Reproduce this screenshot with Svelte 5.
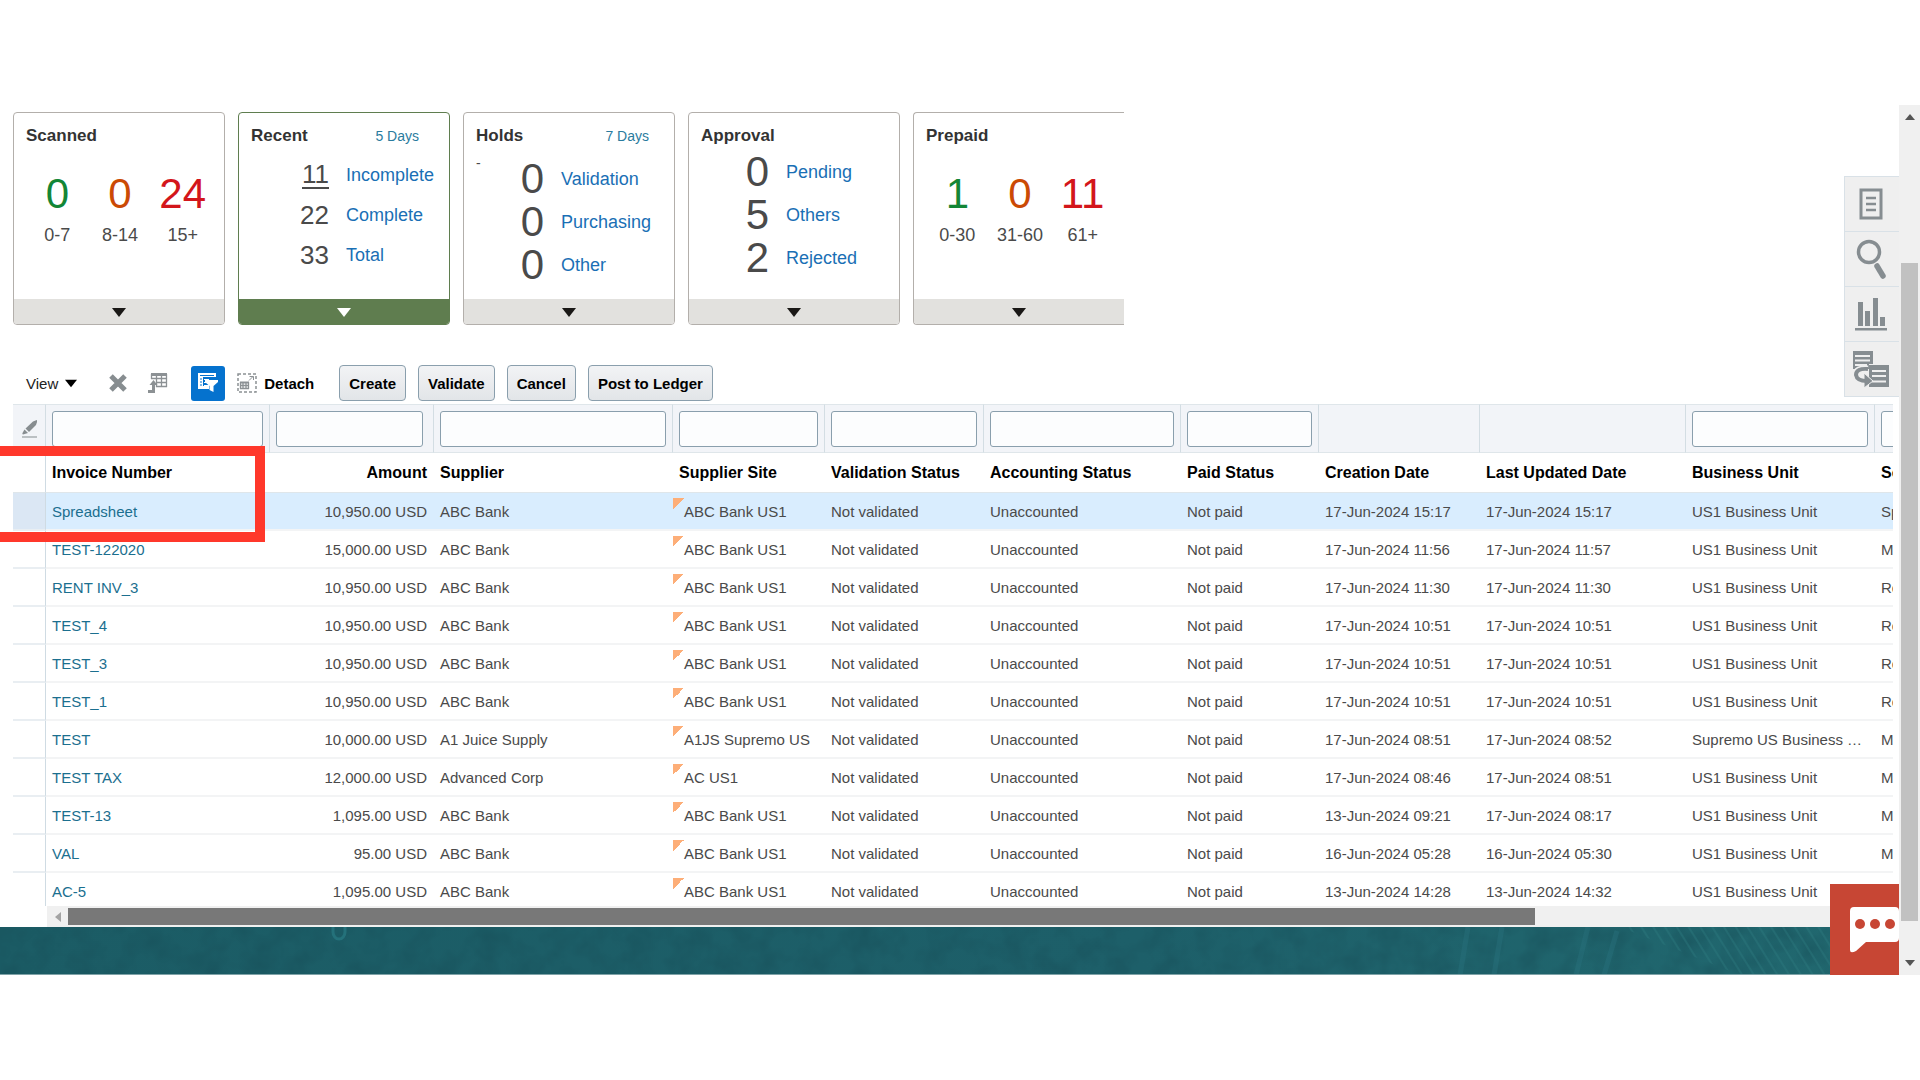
<script>
	const agedTiles = {
		scanned: [
			{ value: 0, range: '0-7', tone: 'ok' },
			{ value: 0, range: '8-14', tone: 'warn' },
			{ value: 24, range: '15+', tone: 'late' }
		],
		prepaid: [
			{ value: 1, range: '0-30', tone: 'ok' },
			{ value: 0, range: '31-60', tone: 'warn' },
			{ value: 11, range: '61+', tone: 'late' }
		]
	};

	const tiles = [
		{ title: 'Scanned', aged: agedTiles.scanned },
		{
			title: 'Recent',
			days: '5 Days',
			kind: 'recent',
			rows: [
				[11, 'Incomplete'],
				[22, 'Complete'],
				[33, 'Total']
			]
		},
		{
			title: 'Holds',
			days: '7 Days',
			kind: 'holds',
			note: '-',
			rows: [
				[0, 'Validation'],
				[0, 'Purchasing'],
				[0, 'Other']
			]
		},
		{
			title: 'Approval',
			kind: 'approval',
			rows: [
				[0, 'Pending'],
				[5, 'Others'],
				[2, 'Rejected']
			]
		},
		{ title: 'Prepaid', aged: agedTiles.prepaid }
	];

	let activeTile = $state('Recent');
	let selected = $state('Spreadsheet');

	const actions = ['Create', 'Validate', 'Cancel', 'Post to Ledger'];

	const columns = [
		{ name: 'Invoice Number', width: 224, filter: true },
		{ name: 'Amount', width: 164, filter: true },
		{ name: 'Supplier', width: 239, filter: true },
		{ name: 'Supplier Site', width: 152, filter: true },
		{ name: 'Validation Status', width: 159, filter: true },
		{ name: 'Accounting Status', width: 197, filter: true },
		{ name: 'Paid Status', width: 138, filter: true },
		{ name: 'Creation Date', width: 161, filter: false },
		{ name: 'Last Updated Date', width: 206, filter: false },
		{ name: 'Business Unit', width: 189, filter: true },
		{ name: 'Source', width: 200, filter: true }
	];

	const unit = 'US1 Business Unit';
	const manual = 'Manual invoice entry';
	const recurring = 'Recurring invoice';

	const invoices = [
		['Spreadsheet', '10,950.00', 'ABC Bank', 'ABC Bank US1', '17-Jun-2024 15:17', '17-Jun-2024 15:17', unit, 'Spreadsheet'],
		['TEST-122020', '15,000.00', 'ABC Bank', 'ABC Bank US1', '17-Jun-2024 11:56', '17-Jun-2024 11:57', unit, manual],
		['RENT INV_3', '10,950.00', 'ABC Bank', 'ABC Bank US1', '17-Jun-2024 11:30', '17-Jun-2024 11:30', unit, recurring],
		['TEST_4', '10,950.00', 'ABC Bank', 'ABC Bank US1', '17-Jun-2024 10:51', '17-Jun-2024 10:51', unit, recurring],
		['TEST_3', '10,950.00', 'ABC Bank', 'ABC Bank US1', '17-Jun-2024 10:51', '17-Jun-2024 10:51', unit, recurring],
		['TEST_1', '10,950.00', 'ABC Bank', 'ABC Bank US1', '17-Jun-2024 10:51', '17-Jun-2024 10:51', unit, recurring],
		['TEST', '10,000.00', 'A1 Juice Supply', 'A1JS Supremo US', '17-Jun-2024 08:51', '17-Jun-2024 08:52', 'Supremo US Business Unit', manual],
		['TEST TAX', '12,000.00', 'Advanced Corp', 'AC US1', '17-Jun-2024 08:46', '17-Jun-2024 08:51', unit, manual],
		['TEST-13', '1,095.00', 'ABC Bank', 'ABC Bank US1', '13-Jun-2024 09:21', '17-Jun-2024 08:17', unit, manual],
		['VAL', '95.00', 'ABC Bank', 'ABC Bank US1', '16-Jun-2024 05:28', '16-Jun-2024 05:30', unit, manual],
		['AC-5', '1,095.00', 'ABC Bank', 'ABC Bank US1', '13-Jun-2024 14:28', '13-Jun-2024 14:32', unit, manual]
	];
</script>

{#snippet caret()}
	<svg class="caret" width="14" height="9" viewBox="0 0 14 9" aria-hidden="true">
		<path d="M0 0H14L7 9Z" fill="currentColor" />
	</svg>
{/snippet}

<div class="app">
	<div class="content">
		<section class="tiles">
			{#each tiles as tile}
				<article class="tile" class:active={tile.title === activeTile}>
					<header>
						<h2>{tile.title}</h2>
						{#if tile.days}<a class="days" href="#days">{tile.days}</a>{/if}
					</header>
					<div class="tile-body">
						{#if tile.aged}
							<div class="aged">
								{#each tile.aged as bucket}
									<div class="bucket">
										<span class="big {bucket.tone}">{bucket.value}</span>
										<span class="range">{bucket.range}</span>
									</div>
								{/each}
							</div>
						{:else}
							{#if tile.note}<span class="note">{tile.note}</span>{/if}
							<div class="counts {tile.kind}">
								{#each tile.rows as [count, label], i}
									<span class="count" class:underlined={tile.kind === 'recent' && i === 0}>{count}</span>
									<a href="#{label}">{label}</a>
								{/each}
							</div>
						{/if}
					</div>
					<button class="tile-foot" aria-label="Show {tile.title}" onclick={() => (activeTile = tile.title)}>
						{@render caret()}
					</button>
				</article>
			{/each}
		</section>

		<div class="toolbar">
			<button class="plain view">View {@render caret()}</button>
			<button class="plain delete" aria-label="Delete">
				<svg width="18" height="18" viewBox="0 0 18 18"><path d="M2 2L16 16M16 2L2 16" stroke="#878d90" stroke-width="5" /></svg>
			</button>
			<button class="plain export" aria-label="Export">
				<svg width="20" height="20" viewBox="0 0 20 20" fill="none" stroke="#8c9194">
					<path d="M3 1.5H19" stroke-width="3" />
					<path d="M3.5 1V6M8.5 1V14M13.5 1V14M18.5 1V14M3 5.5H19M8 9.5H19M8 13.5H19" stroke-width="1.3" />
					<path d="M0 18.5H5.5V11" stroke-width="3" />
					<path d="M1.5 12L5.5 7L9.5 12Z" fill="#8c9194" stroke="none" />
				</svg>
			</button>
			<button class="plain filter-toggle" aria-label="Query by example" aria-pressed="true">
				<svg width="22" height="22" viewBox="0 0 22 22">
					<path d="M1 1H19V5H6V14H12V17H1Z" fill="#fff" />
					<path d="M3 3.5H17M3 7H5M3 10H5M3 13H5" stroke="#0572ce" />
					<path d="M7 7.5H12M7 10.5H10M7 13.5H12" stroke="#fff" />
					<path d="M8 8H21V10L16.5 14V20L12.5 18V14L8 10Z" fill="#fff" />
				</svg>
			</button>
			<button class="plain detach">
				<svg width="20" height="20" viewBox="0 0 20 20" fill="none" stroke="#8c9194">
					<path d="M1 1H19V19H1Z" stroke-width="1.5" stroke-dasharray="3 2" />
					<path d="M3 9.5H12" stroke-width="2" />
					<path d="M3 12.5H12M3 15.5H12M3.5 9V16M6 9V16M9 9V16M11.5 9V16" stroke-width="1.3" />
					<path d="M12 7.5L16 3.5M12.5 3.5H16.5V7" />
				</svg>
				Detach
			</button>
			<div class="actions">
				{#each actions as action}
					<button class="action">{action}</button>
				{/each}
			</div>
		</div>

		<section class="grid">
			<div class="table-view">
				<table>
					<colgroup>
						<col style="width: 33px" />
						{#each columns as column}
							<col style="width: {column.width}px" />
						{/each}
					</colgroup>
					<thead>
						<tr class="filters">
							<td class="handle">
								<svg width="18" height="20" viewBox="0 0 18 20" aria-hidden="true">
									<path d="M4.5 9.5L12 2.5Q15 1 16 1Q16.5 3 15 6L8 13Z" fill="#878d90" />
									<path d="M3.5 10.5L7 14L2 15.5Q1 15 1.5 14Z" fill="#878d90" />
									<path d="M1 18H16" stroke="#a9afb2" stroke-width="1.5" />
								</svg>
							</td>
							{#each columns as column}
								<td class:amount={column.name === 'Amount'}>
									{#if column.filter}<input type="text" aria-label="Filter {column.name}" />{/if}
								</td>
							{/each}
						</tr>
						<tr class="titles">
							<td class="handle"></td>
							{#each columns as column}
								<th scope="col" class:amount={column.name === 'Amount'}>{column.name}</th>
							{/each}
						</tr>
					</thead>
					<tbody>
						{#each invoices as [number, amount, supplier, site, created, updated, business, source]}
							<tr class:selected={number === selected} onclick={() => (selected = number)}>
								<td class="handle"></td>
								<td><a href="#{number}">{number}</a></td>
								<td class="amount">{amount} USD</td>
								<td>{supplier}</td>
								<td class="site">{site}</td>
								<td>Not validated</td>
								<td>Unaccounted</td>
								<td>Not paid</td>
								<td>{created}</td>
								<td>{updated}</td>
								<td>{business}</td>
								<td>{source}</td>
							</tr>
						{/each}
					</tbody>
				</table>
			</div>
			<div class="h-scroll">
				<svg width="6" height="10" viewBox="0 0 6 10" aria-hidden="true"><path d="M6 0V10L0 5Z" fill="#a3a3a3" /></svg>
				<div class="h-track"><div class="h-thumb"></div></div>
			</div>
			<div class="highlight"></div>
		</section>

		<footer class="banner">
			<svg width="100%" height="48" aria-hidden="true">
				<defs>
					<pattern id="hatch" width="10" height="10" patternUnits="userSpaceOnUse" patternTransform="rotate(-32)">
						<path d="M2 0V10" stroke="#2b7a80" stroke-width="2" opacity="0.4" />
					</pattern>
					<filter id="mottle" color-interpolation-filters="sRGB">
						<feTurbulence type="fractalNoise" baseFrequency="0.04" numOctaves="3" />
						<feColorMatrix values="0 0 0 0 0.08  0 0 0 0 0.28  0 0 0 0 0.32  0.7 0 0 0 -0.25" />
					</filter>
				</defs>
				<rect width="100%" height="48" filter="url(#mottle)" />
				<path d="M333 0V5a6 7 0 0 0 12 0V0" fill="none" stroke="#24717a" stroke-width="3" />
				<path d="M1468 0L1460 48M1502 0L1494 48M1588 0L1576 48M1617 4L1604 48" stroke="#2a737f" stroke-width="5" opacity="0.4" />
				<path d="M1620 0H1899V48H1740Z" fill="url(#hatch)" />
			</svg>
		</footer>

		<nav class="rail" aria-label="Panels">
			<button aria-label="Document">
				<svg width="24" height="32" viewBox="0 0 24 32" fill="none" stroke="#868d91">
					<rect x="2" y="2" width="20" height="28" stroke-width="3" />
					<path d="M7 10H17M7 16H17M7 22H17" stroke-width="2.5" />
				</svg>
			</button>
			<button aria-label="Search">
				<svg width="32" height="42" viewBox="0 0 32 42" fill="none" stroke="#868d91">
					<circle cx="14" cy="14" r="10.5" stroke-width="3.5" />
					<path d="M22 28L28 38" stroke-width="5.5" stroke-linecap="round" />
				</svg>
			</button>
			<button aria-label="Analytics">
				<svg width="34" height="36" viewBox="0 0 34 36" fill="#868d91">
					<path d="M4 6H9V30H4ZM11 15H16V30H11ZM19 2H24V30H19ZM26 21H31V30H26ZM1 32H33V34.5H1Z" />
				</svg>
			</button>
			<button aria-label="Related records">
				<svg width="38" height="38" viewBox="0 0 38 38">
					<path d="M1 1H21V14H17V19H1Z" fill="#868d91" />
					<path d="M3 6H18M3 10.5H18M3 15H15" stroke="#efefef" stroke-width="2" />
					<path d="M17 15H37V37H17Z" fill="#868d91" />
					<path d="M20 21H34M20 26H34M20 31.5H34" stroke="#efefef" stroke-width="2" />
					<path d="M16 19Q4 18 4 25Q5 31 15 31" fill="none" stroke="#efefef" stroke-width="7" />
					<path d="M12 23L21 31L12 38Z" fill="#868d91" stroke="#efefef" />
					<path d="M16 19Q4 18 4 25Q5 31 15 31" fill="none" stroke="#868d91" stroke-width="4" />
				</svg>
			</button>
		</nav>

		<button class="chat" aria-label="Open chat">
			<svg width="49" height="46" viewBox="0 0 49 46">
				<path d="M4 0H45Q49 0 49 4V31Q49 35 45 35H16L6 44Q0 47 0 43V4Q0 0 4 0Z" fill="#fff" />
				<g fill="#c74634"><circle cx="10" cy="17" r="5" /><circle cx="25" cy="17" r="5" /><circle cx="40" cy="17" r="5" /></g>
			</svg>
		</button>
	</div>

	<div class="v-scroll" aria-hidden="true">
		<svg width="10" height="6" viewBox="0 0 10 6"><path d="M0 6H10L5 0Z" fill="#555" /></svg>
		<div class="v-track"><div class="v-thumb"></div></div>
		<svg width="10" height="6" viewBox="0 0 10 6"><path d="M0 0H10L5 6Z" fill="#555" /></svg>
	</div>
</div>

<style>
	:global(body) {
		background: #fff;
		font-family: 'Liberation Sans', Arial, sans-serif;
		font-size: 15px;
		color: #4a4a4a;
	}

	button,
	input {
		box-sizing: border-box;
		font: inherit;
	}

	button {
		cursor: pointer;
	}

	svg {
		display: block;
		flex: none;
	}

	a {
		color: #1b6f8f;
		text-decoration: none;
	}

	.app {
		display: flex;
		padding-top: 105px;
	}

	.content {
		position: relative;
		flex: 1;
		min-width: 0;
		padding-top: 7px;
	}

	/* Summary tiles */
	.tiles {
		display: flex;
		gap: 13px;
		padding-left: 13px;
	}

	.tile {
		display: flex;
		flex-direction: column;
		box-sizing: border-box;
		width: 212px;
		height: 213px;
		border: 1px solid #b3afab;
		border-radius: 4px;
		overflow: hidden;
	}

	.tile:last-child {
		width: 211px;
		border-right: 0;
		border-radius: 4px 0 0 4px;
	}

	.tile.active {
		border-color: #5f7d4f;
	}

	.tile header {
		display: flex;
		justify-content: space-between;
		align-items: center;
		padding: 12px 25px 0 12px;
	}

	.tile.active header {
		padding-right: 30px;
	}

	h2 {
		margin: 0;
		font-size: 17px;
		line-height: 22px;
		color: #333;
	}

	.days {
		font-size: 14px;
		color: #2a7b9e;
	}

	.tile-body {
		display: flex;
		flex: 1;
	}

	.aged {
		display: grid;
		grid-template-columns: repeat(3, 1fr);
		flex: 1;
		padding: 22px 10px 0 12px;
	}

	.bucket {
		display: flex;
		flex-direction: column;
		align-items: center;
	}

	.big {
		font-size: 42px;
		line-height: 50px;
	}

	.range {
		font-size: 18px;
		line-height: 32px;
	}

	.ok {
		color: #138636;
	}

	.warn {
		color: #cb4a04;
	}

	.late {
		color: #d3161b;
	}

	.note {
		width: 12px;
		margin-right: -24px;
		padding: 6px 0 0 12px;
		line-height: 20px;
		font-size: 14px;
	}

	.counts {
		display: grid;
		grid-template-columns: 80px auto;
		grid-auto-rows: 43px;
		align-content: start;
		align-items: center;
		column-gap: 17px;
		padding-top: 10px;
	}

	.counts a {
		padding-top: 2px;
		font-size: 18px;
		color: #1a6fb5;
	}

	.count {
		justify-self: end;
		font-size: 42px;
		line-height: 42px;
	}

	.recent {
		grid-template-columns: 90px auto;
		grid-auto-rows: 40px;
		padding-top: 8px;
	}

	.recent a {
		padding-top: 0;
	}

	.recent .count {
		font-size: 26px;
		line-height: 26px;
	}

	.count.underlined {
		border-bottom: 2px solid #4a4a4a;
	}

	.approval {
		padding-top: 3px;
	}

	.tile-foot {
		display: flex;
		justify-content: center;
		align-items: center;
		height: 25px;
		padding: 2px 0 0;
		border: 0;
		background: #e2e1de;
		color: #1a1816;
	}

	.active .tile-foot {
		background: #5f7d4f;
		color: #fff;
	}

	/* Toolbar */
	.toolbar {
		display: flex;
		align-items: center;
		padding: 40px 0 3px 26px;
	}

	.plain {
		display: flex;
		align-items: center;
		padding: 0;
		border: 0;
		background: none;
		color: #000;
	}

	.view {
		gap: 7px;
		color: #222;
	}

	.view .caret {
		width: 12px;
		color: #000;
	}

	.delete {
		margin-left: 32px;
	}

	.export {
		margin-left: 21px;
	}

	.filter-toggle {
		justify-content: center;
		width: 34px;
		height: 35px;
		margin: 0 12px 0 23px;
		border-radius: 3px;
		background: #0572ce;
	}

	.detach {
		gap: 7px;
		font-weight: bold;
	}

	.actions {
		display: flex;
		gap: 12px;
		margin-left: 25px;
	}

	.action {
		height: 36px;
		padding: 0 9px;
		border: 1px solid #8a9fad;
		border-radius: 4px;
		background: linear-gradient(#f2f3f5, #e2e5e8);
		color: #000;
		font-weight: bold;
	}

	/* Invoice table */
	.grid {
		position: relative;
	}

	.table-view {
		height: 502px;
		margin: 0 6px 0 13px;
		overflow: hidden;
	}

	table {
		table-layout: fixed;
		width: 0;
		border-spacing: 0;
	}

	td,
	th {
		box-sizing: border-box;
		height: 38px;
		padding: 0 7px 0 6px;
		border-bottom: 2px solid #f3f4f5;
		overflow: hidden;
		text-align: left;
		text-overflow: ellipsis;
		white-space: nowrap;
	}

	td.handle {
		padding: 0;
		border-right: 1px solid #cfdbe3;
		border-bottom-color: #e9eef2;
	}

	.filters td {
		height: 49px;
		border-top: 1px solid #dfe6ea;
		border-right: 1px solid #d3dde3;
		border-bottom: 1px solid #dfe6ea;
		background: #f2f4f8;
	}

	.filters td:not(.handle) {
		padding-right: 6px;
	}

	.filters td.amount {
		padding-right: 10px;
	}

	.filters .handle svg {
		margin: 0 auto 0 8px;
	}

	.filters input {
		display: block;
		width: 100%;
		height: 36px;
		border: 1px solid #8a9fad;
		border-radius: 3px;
		background: #fcfdfe;
	}

	.titles th,
	.titles td {
		height: 40px;
		border-bottom: 1px solid #dfe6ea;
		color: #000;
		font-size: 16px;
	}

	th.amount,
	tbody .amount {
		text-align: right;
	}

	.selected td {
		background: #d9edfe;
	}

	.selected td.handle {
		background: #dbe7f4;
	}

	td.site {
		padding-left: 11px;
		background-image: linear-gradient(135deg, #fdae78 50%, transparent 50%);
		background-position: 0 5px;
		background-size: 11px 11px;
		background-repeat: no-repeat;
	}

	.h-scroll {
		display: flex;
		align-items: center;
		height: 21px;
		margin: 0 6px 0 47px;
		padding-left: 8px;
		gap: 7px;
		background: #f0f0f0;
	}

	.h-track {
		flex: 1;
	}

	.h-thumb {
		width: 80.4%;
		height: 17px;
		background: #787878;
	}

	/* Marks the invoice number column and the imported row */
	.highlight {
		position: absolute;
		top: 42px;
		left: 0;
		box-sizing: border-box;
		width: 265px;
		height: 96px;
		border: 10px solid #ff382b;
		border-left: 0;
		pointer-events: none;
	}

	.banner {
		border-bottom: 1px solid #7fa3a8;
		background: linear-gradient(90deg, #1b5c65, #1d5f69 60%, #21686f);
	}

	.banner svg {
		height: 47px;
	}

	.rail {
		position: absolute;
		top: 71px;
		right: 0;
		display: flex;
		flex-direction: column;
		width: 55px;
		border-bottom: 1px solid #d9e1e7;
	}

	.rail button {
		display: flex;
		justify-content: center;
		align-items: center;
		height: 55px;
		padding: 0 3px 0 0;
		border: 0;
		border-top: 1px solid #d9e1e7;
		border-left: 1px solid #d9e1e7;
		background: #efefef;
	}

	.chat {
		position: absolute;
		right: 0;
		bottom: 0;
		width: 69px;
		height: 91px;
		padding: 0 0 0 20px;
		border: 0;
		background: #c74634;
	}

	/* Page scrollbar */
	.v-scroll {
		display: flex;
		flex-direction: column;
		align-items: center;
		gap: 8px;
		box-sizing: border-box;
		width: 21px;
		padding: 9px 0;
		background: #f0f0f0;
	}

	.v-track {
		display: flex;
		flex: 1;
		flex-direction: column;
		justify-content: flex-end;
		padding-bottom: 31px;
	}

	.v-thumb {
		width: 17px;
		height: 83%;
		background: #c1c1c1;
	}
</style>
